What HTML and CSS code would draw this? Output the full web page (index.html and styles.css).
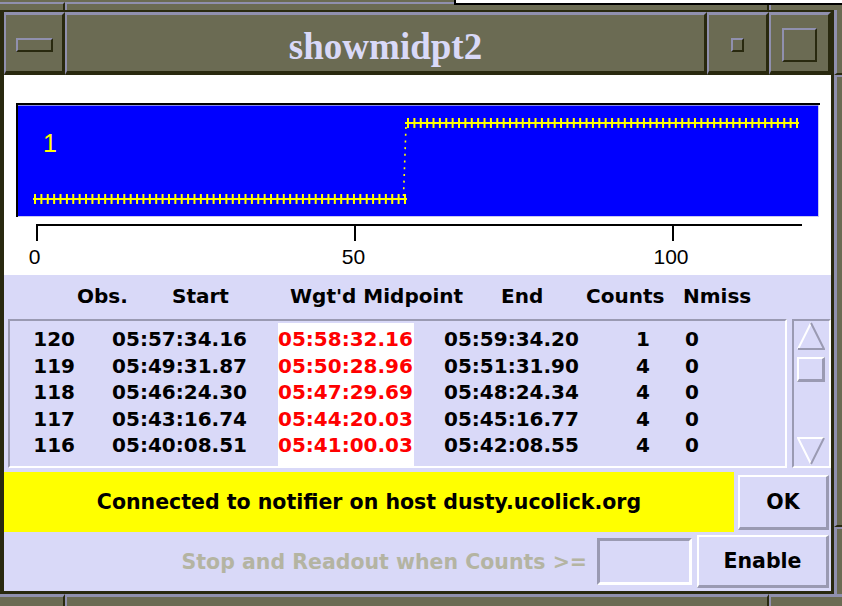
FILE: index.html
```html
<!DOCTYPE html>
<html lang="en">
<head>
    <meta charset="UTF-8">
    <title>showmidpt2</title>
    <link rel="stylesheet" href="styles.css">
</head>
<body>
    <div class="behind"></div>

    <div class="frame-top">
        <div class="seg seg-first"></div>
        <div class="seg seg-mid"></div>
        <div class="seg seg-last"></div>
    </div>

    <div class="window">
        <div class="titlebar">
            <div class="tb-btn tb-menu"><span class="ico ico-menu"></span></div>
            <div class="tb-btn tb-title">showmidpt2</div>
            <div class="tb-btn tb-min"><span class="ico ico-min"></span></div>
            <div class="tb-btn tb-max"><span class="ico ico-max"></span></div>
        </div>

        <div class="content">
            <div class="plot">
                <svg width="827" height="200" viewBox="0 0 827 200" xmlns="http://www.w3.org/2000/svg">
                    <rect x="12" y="28" width="804" height="2" fill="#000"/>
                    <rect x="12" y="28" width="2" height="114" fill="#000"/>
                    <rect x="14" y="30" width="801" height="112" fill="#c8c8f0"/>
                    <rect x="14" y="30" width="800" height="111" fill="#0000ff"/>
                    <rect x="14" y="30" width="800" height="1" fill="#8a8ae8"/>
                    <text x="39" y="77" class="plot-label">1</text>
                    <g stroke="#ffff00" fill="none">
                        <path d="M29 124H403" stroke-width="2"/>
                        <path d="M30 124H402" stroke-width="10" stroke-dasharray="2 4.379"/>
                        <path d="M401 48H795" stroke-width="2"/>
                        <path d="M403 48H794" stroke-width="10" stroke-dasharray="2 4.377"/>
                        <path d="M399.5 121L402 51" stroke-width="1.6" stroke-dasharray="2 4.7"/>
                    </g>
                    <g stroke="#000" stroke-width="2" fill="none">
                        <path d="M32 150H798"/>
                        <path d="M33 149V166M351 149V166M669 149V166"/>
                    </g>
                    <g class="axis-label" text-anchor="middle">
                        <text x="30.7" y="188.5">0</text>
                        <text x="349.5" y="188.5">50</text>
                        <text x="667" y="188.5">100</text>
                    </g>
                </svg>
            </div>

            <div class="panel">
                <div class="header">
                    <span>Obs.</span>
                    <span>Start</span>
                    <span>Wgt'd Midpoint</span>
                    <span>End</span>
                    <span>Counts</span>
                    <span>Nmiss</span>
                </div>

                <div class="list-row">
                    <div class="list">
                        <div class="col c-obs">
                            <div>120</div><div>119</div><div>118</div><div>117</div><div>116</div>
                        </div>
                        <div class="col c-start">
                            <div>05:57:34.16</div><div>05:49:31.87</div><div>05:46:24.30</div><div>05:43:16.74</div><div>05:40:08.51</div>
                        </div>
                        <div class="col c-mid">
                            <div>05:58:32.16</div><div>05:50:28.96</div><div>05:47:29.69</div><div>05:44:20.03</div><div>05:41:00.03</div>
                        </div>
                        <div class="col c-end">
                            <div>05:59:34.20</div><div>05:51:31.90</div><div>05:48:24.34</div><div>05:45:16.77</div><div>05:42:08.55</div>
                        </div>
                        <div class="col c-counts">
                            <div>1</div><div>4</div><div>4</div><div>4</div><div>4</div>
                        </div>
                        <div class="col c-nmiss">
                            <div>0</div><div>0</div><div>0</div><div>0</div><div>0</div>
                        </div>
                    </div>
                    <div class="scrollbar">
                        <svg class="arrow" width="28" height="28" viewBox="0 0 28 28">
                            <path d="M14 1L1 27" stroke="#fff" stroke-width="2"/>
                            <path d="M14 1L27 27H1" stroke="#9a9ab2" stroke-width="2" fill="none"/>
                        </svg>
                        <div class="slider"></div>
                        <svg class="arrow arrow-down" width="28" height="28" viewBox="0 0 28 28">
                            <path d="M27 1H1L14 27" stroke="#fff" stroke-width="2" fill="none"/>
                            <path d="M27 1L14 27" stroke="#9a9ab2" stroke-width="2"/>
                        </svg>
                    </div>
                </div>

                <div class="status-row">
                    <div class="status">Connected to notifier on host dusty.ucolick.org</div>
                    <button class="btn btn-ok">OK</button>
                </div>

                <div class="ctl-row">
                    <span class="ctl-label">Stop and Readout when Counts &gt;=</span>
                    <input class="ctl-input" type="text">
                    <button class="btn btn-enable">Enable</button>
                </div>
            </div>
        </div>
    </div>

    <div class="frame-right">
        <div class="rseg rseg-top"></div>
        <div class="rseg rseg-mid"></div>
        <div class="rseg rseg-bot"></div>
    </div>

    <div class="frame-bottom">
        <div class="bseg bseg-first"></div>
        <div class="bseg bseg-mid"></div>
        <div class="bseg bseg-last"></div>
    </div>
</body>
</html>
```

FILE: styles.css
```css
:root {
    --olive: #6b6b53;
    --dark: #29290f;
    --hl: #9090ae;
    --lav: #d9d9f8;
    --shadow: #9a9ab2;
    --muted: #b4b4a2;
}
* {
    box-sizing: border-box;
}
body {
    margin: 0;
    width: 842px;
    height: 606px;
    overflow: hidden;
    position: relative;
    background: var(--olive);
    font-family: "DejaVu Sans", sans-serif;
    display: grid;
    grid-template-columns: 834px 8px;
    grid-template-rows: 10px 584px 12px;
}
.behind {
    position: absolute;
    left: 454px;
    top: 0;
    width: 388px;
    height: 5px;
    background: #fff;
    border-left: 2px solid #000;
    border-bottom: 2px solid #000;
}

/* window manager frame */
.frame-top {
    grid-column: 1 / 3;
    display: flex;
    padding-top: 2px;
}
.seg {
    height: 8px;
    border-top: 2px solid var(--hl);
}
.seg-first {
    width: 65px;
    border-right: 2px solid var(--dark);
}
.seg-mid {
    width: 704px;
    border-left: 2px solid var(--hl);
    border-right: 2px solid var(--dark);
}
.seg-last {
    flex: 1;
    border-left: 2px solid var(--hl);
}
.frame-right {
    display: flex;
    flex-direction: column;
}
.rseg {
    border-left: 3px solid var(--hl);
}
.rseg-top {
    height: 65px;
    border-bottom: 2px solid var(--dark);
}
.rseg-mid {
    height: 452px;
    border-top: 2px solid var(--hl);
    border-bottom: 2px solid var(--dark);
}
.rseg-bot {
    flex: 1;
    border-top: 2px solid var(--hl);
}
.frame-bottom {
    grid-column: 1 / 3;
    display: flex;
}
.bseg {
    border-top: 3px solid var(--hl);
}
.bseg-first {
    width: 65px;
    border-right: 2px solid var(--dark);
}
.bseg-mid {
    width: 704px;
    border-left: 2px solid var(--hl);
    border-right: 2px solid var(--dark);
}
.bseg-last {
    flex: 1;
    border-left: 2px solid var(--hl);
}

.window {
    border-style: solid;
    border-color: var(--dark);
    border-width: 2px 3px 3px 4px;
    display: flex;
    flex-direction: column;
}

/* title bar */
.titlebar {
    display: flex;
    height: 63px;
}
.tb-btn {
    display: flex;
    align-items: center;
    justify-content: center;
    padding-top: 4px;
    border-style: solid;
    border-width: 3px 3px 4px 2px;
    border-color: var(--hl) var(--dark) var(--dark) var(--hl);
}
.tb-menu { width: 61px; }
.tb-title {
    width: 642px;
    padding-top: 7px;
    font-family: "Liberation Serif", serif;
    font-weight: bold;
    font-size: 37px;
    color: var(--lav);
}
.tb-min { width: 62px; }
.tb-max { width: 62px; }
.ico {
    display: block;
    border-style: solid;
    border-width: 2px;
    border-color: var(--hl) var(--dark) var(--dark) var(--hl);
}
.ico-menu { width: 37px; height: 14px; }
.ico-min { width: 13px; height: 14px; }
.ico-max { width: 35px; height: 34px; }

.content {
    flex: 1;
    display: flex;
    flex-direction: column;
}
.plot {
    height: 200px;
    background: #fff;
}
.plot svg {
    display: block;
}
.plot-label {
    font-family: "Liberation Sans", sans-serif;
    font-size: 25px;
    fill: #ffff00;
}
.axis-label {
    font-family: "Liberation Sans", sans-serif;
    font-size: 21px;
    fill: #000;
}

/* lower panel */
.panel {
    flex: 1;
    background: var(--lav);
    display: flex;
    flex-direction: column;
}
.header {
    height: 44px;
    line-height: 42px;
    padding-left: 73px;
    display: grid;
    grid-template-columns: 95px 118px 211px 85px 97px auto;
    font-weight: bold;
    font-size: 20px;
}
.list-row {
    display: flex;
    height: 149px;
    padding-left: 4px;
}
.list {
    width: 779px;
    display: flex;
    border: 2px solid;
    border-color: var(--shadow) #fff #fff var(--shadow);
    font-weight: bold;
    font-size: 20px;
}
.col {
    padding-top: 5px;
    line-height: 26.5px;
}
.c-obs { width: 65px; text-align: right; }
.c-start { width: 172px; text-align: right; }
.c-mid {
    width: 136px;
    margin-left: 31px;
    margin-top: 2px;
    padding-top: 3px;
    background: #fff;
    color: #ff0000;
}
.c-end { width: 137px; margin-left: 30px; }
.c-counts { width: 69px; text-align: right; }
.c-nmiss { margin-left: 35px; }

.scrollbar {
    width: 39px;
    margin-left: 5px;
    display: flex;
    flex-direction: column;
    padding: 1px 4px 0 3px;
    border: 2px solid;
    border-color: var(--shadow) #fff #fff var(--shadow);
}
.arrow {
    display: block;
}
.arrow-down {
    margin-top: auto;
    margin-bottom: 1px;
}
.slider {
    width: 28px;
    height: 25px;
    margin-top: 7px;
    border-style: solid;
    border-width: 2px 3px 3px 2px;
    border-color: #fff var(--shadow) var(--shadow) #fff;
}

.status-row {
    display: flex;
    height: 60px;
    margin-top: 4px;
}
.status {
    width: 730px;
    background: #ffff00;
    text-align: center;
    line-height: 60px;
    font-weight: bold;
    font-size: 20.5px;
}
.btn {
    padding: 0;
    font-family: "DejaVu Sans", sans-serif;
    font-weight: bold;
    font-size: 20.5px;
    color: #000;
    background: var(--lav);
    border-style: solid;
    border-width: 2px 3px 3px 2px;
    border-color: #fff var(--shadow) var(--shadow) #fff;
}
.btn-ok {
    width: 91px;
    margin: 3px 2px 2px 4px;
}
.ctl-row {
    height: 59px;
    display: flex;
    align-items: center;
    justify-content: flex-end;
    padding-right: 2px;
}
.ctl-label {
    margin-right: 10px;
    font-weight: bold;
    font-size: 20.5px;
    color: var(--muted);
}
.ctl-input {
    width: 95px;
    height: 47px;
    margin: 0 5px 0 0;
    background: var(--lav);
    border: 3px solid;
    border-color: var(--shadow) #fff #fff var(--shadow);
    outline: none;
}
.btn-enable {
    width: 132px;
    height: 53px;
}
```
